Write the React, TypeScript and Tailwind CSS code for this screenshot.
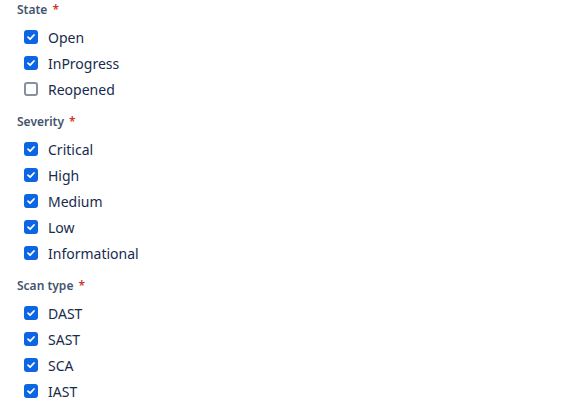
import { useState } from 'react'

interface Group {
  label: string
  options: { name: string; checked: boolean }[]
}

const GROUPS: Group[] = [
  {
    label: 'State',
    options: [
      { name: 'Open', checked: true },
      { name: 'InProgress', checked: true },
      { name: 'Reopened', checked: false },
    ],
  },
  {
    label: 'Severity',
    options: [
      { name: 'Critical', checked: true },
      { name: 'High', checked: true },
      { name: 'Medium', checked: true },
      { name: 'Low', checked: true },
      { name: 'Informational', checked: true },
    ],
  },
  {
    label: 'Scan type',
    options: [
      { name: 'DAST', checked: true },
      { name: 'SAST', checked: true },
      { name: 'SCA', checked: true },
      { name: 'IAST', checked: true },
    ],
  },
]

function Box({ checked }: { checked: boolean }) {
  return checked ? (
    <span className="flex h-[14px] w-[14px] items-center justify-center rounded-[3px] bg-[#0c66e4]">
      <svg width="10" height="10" viewBox="0 0 10 10" fill="none">
        <path d="M2 5.2 4.1 7.2 8 3" stroke="white" strokeWidth="1.8" strokeLinecap="round" strokeLinejoin="round" />
      </svg>
    </span>
  ) : (
    <span className="h-[14px] w-[14px] rounded-[3px] border-2 border-[#8590a2] bg-white" />
  )
}

export default function App() {
  const [groups, setGroups] = useState(GROUPS)

  const toggle = (g: number, o: number) => {
    setGroups(prev =>
      prev.map((grp, gi) =>
        gi !== g
          ? grp
          : { ...grp, options: grp.options.map((op, oi) => (oi === o ? { ...op, checked: !op.checked } : op)) }
      )
    )
  }

  return (
    <div className="h-[406px] w-[574px] bg-white pl-[17px]" style={{ fontFamily: '"Noto Sans", "Open Sans", sans-serif' }}>
      <div className="flex flex-col gap-[10px]">
        {groups.map((grp, gi) => (
          <div key={grp.label}>
            <div className="flex h-5 items-center text-[12px] font-semibold text-[#44546f]">
              {grp.label}
              <span className="ml-[5px] text-[#c9372c]">*</span>
            </div>
            <div className="mt-1 flex flex-col pl-[7px]">
              {grp.options.map((op, oi) => (
                <label key={op.name} className="flex h-[26px] cursor-pointer items-center gap-[10px]" onClick={() => toggle(gi, oi)}>
                  <Box checked={op.checked} />
                  <span className="text-[14px] text-[#172b4d]">{op.name}</span>
                </label>
              ))}
            </div>
          </div>
        ))}
      </div>
    </div>
  )
}
